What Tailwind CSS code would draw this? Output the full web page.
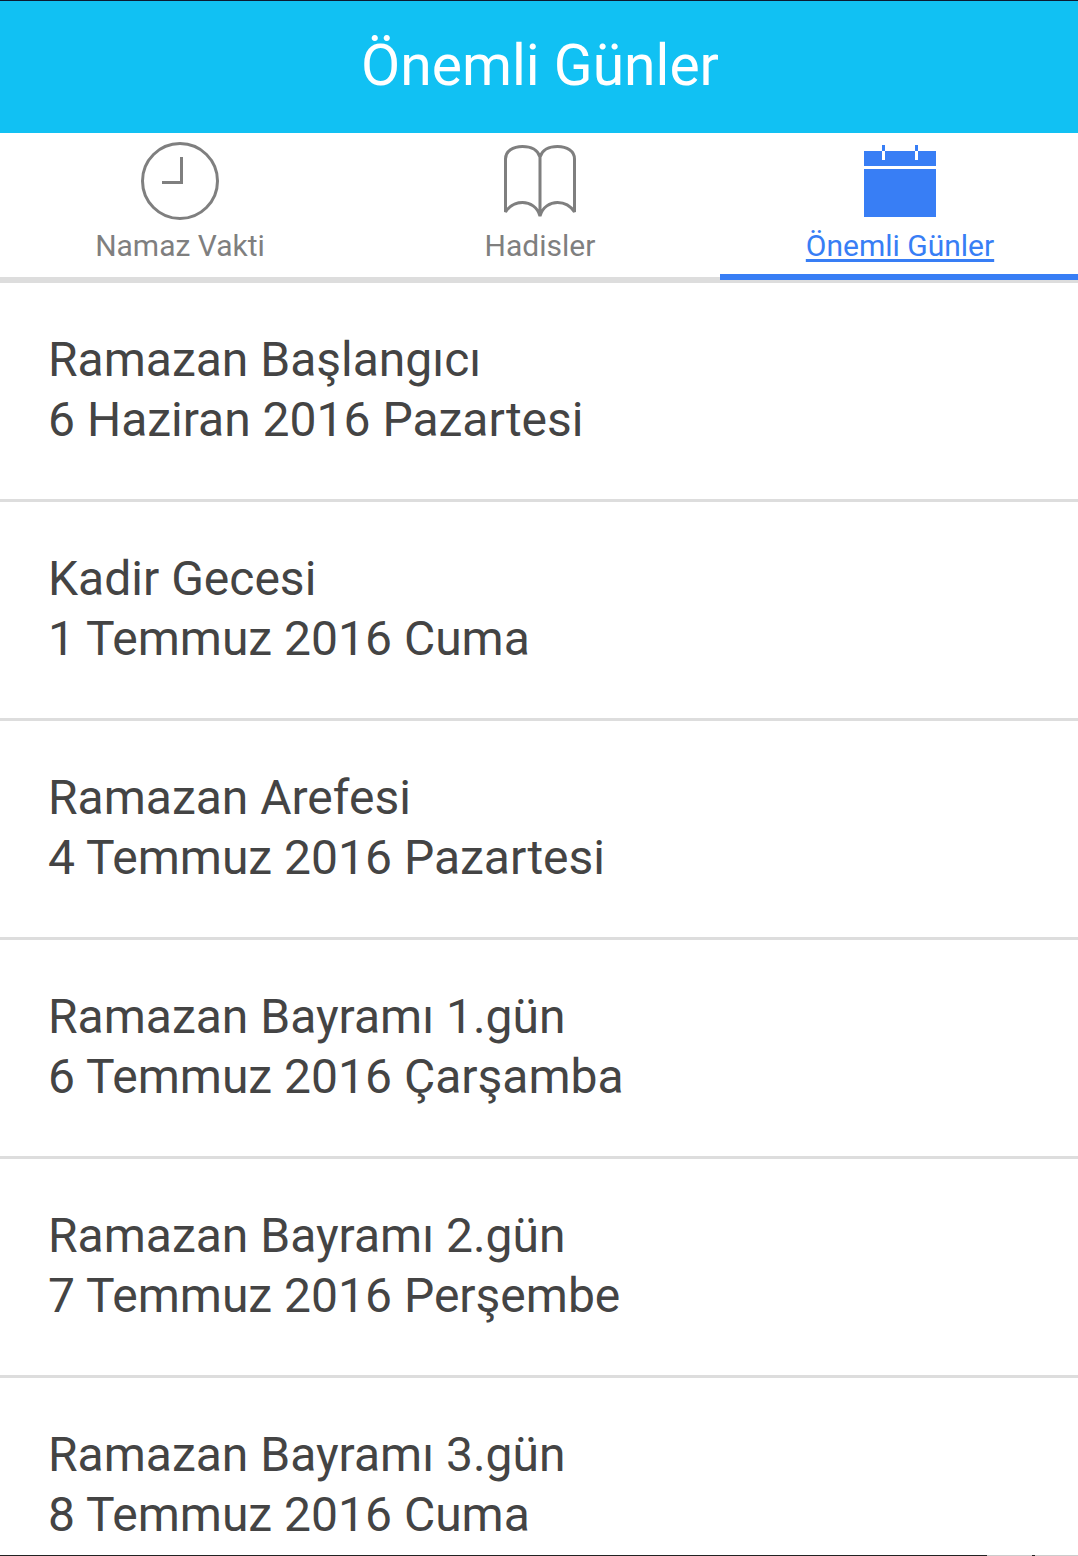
<!DOCTYPE html>
<html lang="tr">
<head>
  <meta charset="UTF-8">
  <meta name="viewport" content="width=device-width, initial-scale=1.0">
  <title>Önemli Günler</title>
  <script src="https://cdn.jsdelivr.net/npm/@tailwindcss/browser@4"></script>
</head>
<body class="h-screen flex flex-col overflow-hidden bg-white border-t border-[#0b1a33] font-[Roboto,sans-serif] text-[#444]">

  <!-- Header -->
  <header class="-mr-0.5 shrink-0 bg-[#11c1f3] pb-0.5 text-white text-center">
    <h1 class="text-[57px] leading-[130px]">Önemli Günler</h1>
  </header>

  <!-- Tabs -->
  <nav class="-mr-0.5 h-[150px] shrink-0 grid grid-cols-3 border-b-6 border-[#ddd] text-[#7f7f7f] text-[30px] leading-[40px]">
    <a href="#namaz" class="flex flex-col items-center pt-[9px]">
      <svg class="size-[78px] shrink-0" viewBox="0 0 78 78" fill="none" stroke="currentColor" stroke-width="3" aria-hidden="true">
        <circle cx="39" cy="39" r="37.5" />
        <path d="M40.5 15v25.500H21" />
      </svg>
      <span class="mt-1.5">Namaz Vakti</span>
    </a>
    <a href="#hadisler" class="flex flex-col items-center pt-[9px]">
      <svg class="size-[78px] shrink-0" viewBox="0 0 78 78" fill="none" stroke="currentColor" stroke-width="3" stroke-linejoin="bevel" aria-hidden="true">
        <path d="M39 74V15C37 8 30 4.500 21.500 4.500C12 4.500 4.500 9 4.500 17V70C9 63 15 60.500 21.500 60.500C29 60.500 36.500 65 39 74C41.500 65 49 60.500 56.500 60.500C63 60.500 69 63 73.500 70V17C73.500 9 66 4.500 56.500 4.500C48 4.500 41 8 39 15" />
      </svg>
      <span class="mt-1.5">Hadisler</span>
    </a>
    <a href="#gunler" aria-current="page" class="-mb-[3px] flex flex-col items-center pt-[9px] border-b-6 border-[#387ef5] text-[#387ef5]">
      <svg class="size-[78px] shrink-0" viewBox="0 0 78 78" fill="currentColor" shape-rendering="crispEdges" aria-hidden="true">
        <path d="M21 3h3v6h-3zM54 3h3v6h-3zM3 9h18v9h3V9h30v9h3V9h18v15H3zM3 27h72v48H3z" />
      </svg>
      <span class="mt-1.5 underline decoration-3 underline-offset-3">Önemli Günler</span>
    </a>
  </nav>

  <!-- Important days -->
  <main class="flex-1 min-h-0 overflow-hidden">
    <ul class="text-[48px] leading-[60px]">
      <li class="px-12 pt-[47px] pb-[49px] border-b-3 border-[#ddd]">
        <h2>Ramazan Başlangıcı</h2>
        <p>6 Haziran 2016 Pazartesi</p>
      </li>
      <li class="px-12 pt-[47px] pb-[49px] border-b-3 border-[#ddd]">
        <h2>Kadir Gecesi</h2>
        <p>1 Temmuz 2016 Cuma</p>
      </li>
      <li class="px-12 pt-[47px] pb-[49px] border-b-3 border-[#ddd]">
        <h2>Ramazan Arefesi</h2>
        <p>4 Temmuz 2016 Pazartesi</p>
      </li>
      <li class="px-12 pt-[47px] pb-[49px] border-b-3 border-[#ddd]">
        <h2>Ramazan Bayramı 1.gün</h2>
        <p>6 Temmuz 2016 Çarşamba</p>
      </li>
      <li class="px-12 pt-[47px] pb-[49px] border-b-3 border-[#ddd]">
        <h2>Ramazan Bayramı 2.gün</h2>
        <p>7 Temmuz 2016 Perşembe</p>
      </li>
      <li class="px-12 pt-[47px] pb-[49px] border-b-3 border-[#ddd]">
        <h2>Ramazan Bayramı 3.gün</h2>
        <p>8 Temmuz 2016 Cuma</p>
      </li>
    </ul>
  </main>

  <!-- Bottom edge -->
  <div class="h-px shrink-0 flex bg-[#222]">
    <div class="ml-auto w-[45px] bg-[#ccc]"></div>
    <div class="ml-[3px] w-[43px] bg-[#ccc]"></div>
  </div>

</body>
</html>
